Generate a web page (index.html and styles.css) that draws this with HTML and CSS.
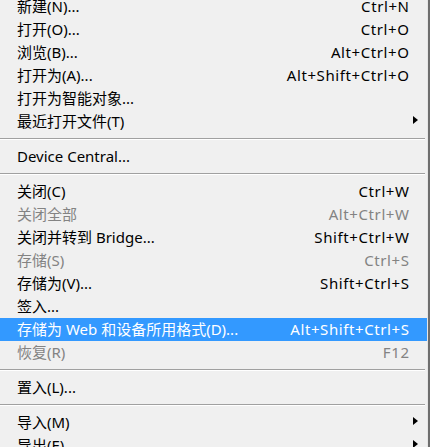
FILE: index.html
```html
<!DOCTYPE html>
<html lang="zh-CN">
<head>
<meta charset="utf-8">
<title>文件菜单</title>
<link rel="stylesheet" href="styles.css">
</head>
<body>
<div class="menu">
  <div class="item"><span class="label">新建(N)...</span><span class="key">Ctrl+N</span><span class="sub"></span></div>
  <div class="item"><span class="label">打开(O)...</span><span class="key">Ctrl+O</span><span class="sub"></span></div>
  <div class="item"><span class="label">浏览(B)...</span><span class="key">Alt+Ctrl+O</span><span class="sub"></span></div>
  <div class="item"><span class="label">打开为(A)...</span><span class="key">Alt+Shift+Ctrl+O</span><span class="sub"></span></div>
  <div class="item"><span class="label">打开为智能对象...</span><span class="key"></span><span class="sub"></span></div>
  <div class="item"><span class="label">最近打开文件(T)</span><span class="key"></span><span class="sub"><i class="arrow"></i></span></div>
  <div class="sep"></div>
  <div class="item"><span class="label">Device Central...</span><span class="key"></span><span class="sub"></span></div>
  <div class="sep"></div>
  <div class="item"><span class="label">关闭(C)</span><span class="key">Ctrl+W</span><span class="sub"></span></div>
  <div class="item disabled"><span class="label">关闭全部</span><span class="key">Alt+Ctrl+W</span><span class="sub"></span></div>
  <div class="item"><span class="label">关闭并转到 Bridge...</span><span class="key">Shift+Ctrl+W</span><span class="sub"></span></div>
  <div class="item disabled"><span class="label">存储(S)</span><span class="key">Ctrl+S</span><span class="sub"></span></div>
  <div class="item"><span class="label">存储为(V)...</span><span class="key">Shift+Ctrl+S</span><span class="sub"></span></div>
  <div class="item"><span class="label">签入...</span><span class="key"></span><span class="sub"></span></div>
  <div class="item active"><span class="label">存储为 Web 和设备所用格式(D)...</span><span class="key">Alt+Shift+Ctrl+S</span><span class="sub"></span></div>
  <div class="item disabled"><span class="label">恢复(R)</span><span class="key">F12</span><span class="sub"></span></div>
  <div class="sep"></div>
  <div class="item"><span class="label">置入(L)...</span><span class="key"></span><span class="sub"></span></div>
  <div class="sep"></div>
  <div class="item"><span class="label">导入(M)</span><span class="key"></span><span class="sub"><i class="arrow"></i></span></div>
  <div class="item"><span class="label">导出(E)</span><span class="key"></span><span class="sub"><i class="arrow"></i></span></div>
</div>
</body>
</html>
```

FILE: styles.css
```css
html, body {
  margin: 0;
  padding: 0;
  background: #f0f0f0;
  overflow: hidden;
}

.menu {
  width: 427px;
  height: 460px;
  margin-top: -5px;
  background: #f0f0f0;
  border-right: 1px solid #e6e6e6;
  box-shadow: 2px 0 0 #6e6e6e;
  font-family: "Noto Sans", "Noto Sans CJK SC", sans-serif;
  font-size: 15px;
  color: #000;
}

.item {
  display: flex;
  align-items: center;
  height: 23px;
  line-height: 23px;
  padding-left: 17px;
  white-space: nowrap;
}

.label {
  flex: 1;
}

.key {
  text-align: right;
  letter-spacing: 0.6px;
  margin-right: -0.6px;
}

.sub {
  width: 18px;
  display: flex;
  align-items: center;
  justify-content: flex-start;
  padding-left: 4px;
  box-sizing: border-box;
}

.arrow {
  display: block;
  width: 0;
  height: 0;
  border-top: 4.5px solid transparent;
  border-bottom: 4.5px solid transparent;
  border-left: 5px solid #000;
  margin-top: -3px;
}

.disabled {
  color: #838383;
}

.active {
  background: #3399ff;
  color: #fff;
}

.sep {
  height: 12px;
  display: flex;
  flex-direction: column;
  justify-content: center;
  margin-right: 2px;
}

.sep::before {
  content: "";
  display: block;
  height: 1px;
  background: #a0a0a0;
  border-bottom: 1px solid #ffffff;
}
```
